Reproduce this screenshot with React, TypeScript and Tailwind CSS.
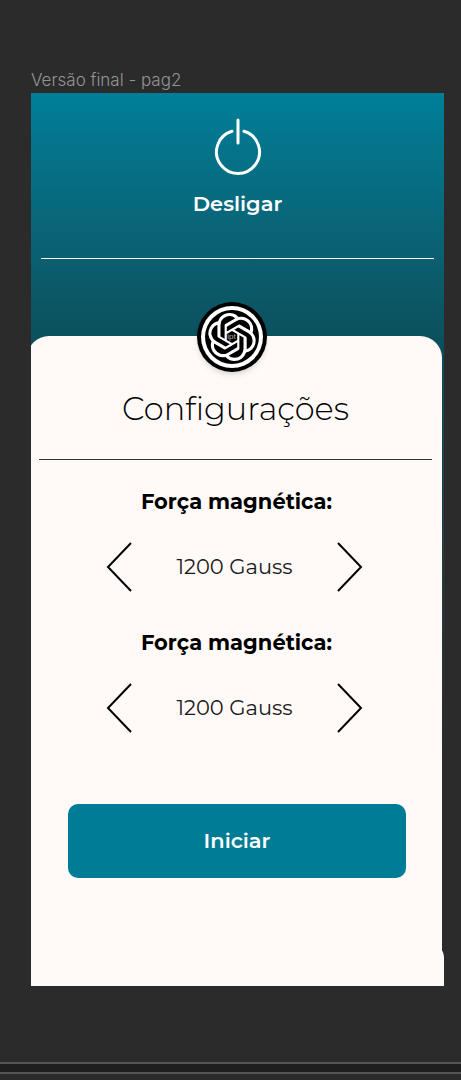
import { SiOpenai } from "react-icons/si";

function Chevron({ direction }: { direction: "left" | "right" }) {
  return (
    <svg viewBox="0 0 26 50" className="h-[50px] w-[26px]" fill="none" stroke="currentColor" strokeWidth="2" aria-hidden="true">
      <path d={direction === "left" ? "M25 1 2 25 25 49" : "M1 1 24 25 1 49"} />
    </svg>
  );
}

function Setting({ label, value }: { label: string; value: string }) {
  return (
    <section className="flex flex-col items-center">
      <h2 className="text-[21px] leading-7 font-bold">{label}</h2>
      <div className="mt-[26px] mr-1 flex w-[257px] items-center justify-between">
        <button type="button" aria-label="Diminuir">
          <Chevron direction="left" />
        </button>
        <output className="text-[21px] leading-7 font-normal text-[#1a1a1a]">{value}</output>
        <button type="button" aria-label="Aumentar">
          <Chevron direction="right" />
        </button>
      </div>
    </section>
  );
}

export default function App() {
  return (
    <div className="flex min-h-screen flex-col bg-[#2b2b2b] font-['Montserrat','Inter',sans-serif]">
      <div className="mr-[17px] ml-[31px] flex flex-1 flex-col pt-[69px]">
        <p className="h-6 font-['Inter',sans-serif] text-[17px] leading-[22px] font-light text-[#959595]">Versão final - pag2</p>
        <main className="flex flex-col overflow-hidden bg-linear-to-b from-[#007f99] via-[#0c4c58] via-30% to-[#2b2b2b] to-75%">
          <header className="flex h-[243px] flex-col px-[10px] pt-[25px] text-white">
            <button type="button" className="flex flex-col items-center">
              <svg viewBox="0 0 50 58" className="h-[58px] w-[50px]" fill="none" stroke="currentColor" strokeWidth="3" strokeLinecap="round" aria-hidden="true">
                <path d="M25 2v23M19 13.300a21.500 21.500 0 1 0 12 0" />
              </svg>
              <span className="mt-[14px] text-[21px] leading-7 font-semibold">Desligar</span>
            </button>
            <div className="mt-10 h-px bg-white" />
          </header>
          <div className="mr-[2px] -ml-1 flex flex-col rounded-t-[22px] bg-[#fff9f8] pb-[80px] pl-1 text-black">
            <div className="-mt-[34px] mr-[10px] flex size-[70px] items-center justify-center self-center rounded-full bg-black shadow-md">
              <div className="flex size-[62px] items-center justify-center rounded-full bg-white">
                <div className="relative flex size-[54px] items-center justify-center rounded-full bg-black text-white">
                  <SiOpenai className="size-[48px]" aria-hidden="true" />
                  <span className="absolute inset-0 flex items-center justify-center font-['Liberation_Sans',sans-serif] text-[8px] leading-none text-[#b0b0b0]">
                    ipt
                  </span>
                </div>
              </div>
            </div>
            <h1 className="mt-4 mr-[2px] text-center text-[32px] leading-[42px] font-light">Configurações</h1>
            <div className="mt-[29px] mr-[10px] ml-2 h-px bg-[#333333]" />
            <div className="mt-7 flex flex-col items-center gap-[37px]">
              <Setting label="Força magnética:" value="1200 Gauss" />
              <Setting label="Força magnética:" value="1200 Gauss" />
            </div>
            <button type="button" className="mt-[71px] mr-9 ml-[37px] h-[74px] rounded-[10px] bg-[#007c96] text-[21px] font-semibold text-white">
              Iniciar
            </button>
          </div>
          <div className="-mt-4 h-[44px] rounded-tr-[16px] bg-[#fff9f8]" />
        </main>
      </div>
      <div className="h-3 border-y-2 border-[#555555] bg-[#1e1e1e]" />
      <div className="h-[6px]" />
    </div>
  );
}
